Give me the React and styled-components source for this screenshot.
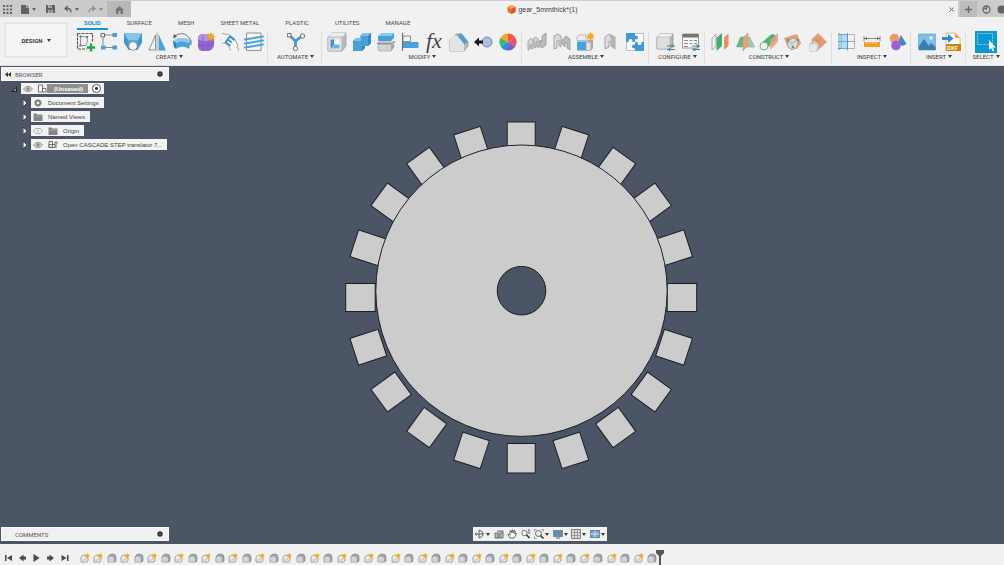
import React, { useState } from "react";
import styled, { createGlobalStyle } from "styled-components";

const GlobalStyle = createGlobalStyle`
  * {
    box-sizing: border-box;
  }
  body {
    margin: 0;
    overflow: hidden;
    font-family: Roboto, "Liberation Sans", sans-serif;
    font-size: 6px;
    color: #3c3c3c;
  }
  button {
    font: inherit;
    color: inherit;
    margin: 0;
    padding: 0;
    border: 0;
    background: none;
  }
  svg {
    display: block;
    flex: none;
    overflow: visible;
  }
`;

const Page = styled.div`
  display: flex;
  flex-direction: column;
  min-height: 100vh;
  background: #f1f1f1;
`;

/* ---------- title bar ---------- */

const TitleBar = styled.header`
  display: flex;
  height: 17px;
  padding-top: 1px;
  background: #cbcbcb;
`;

const QuickAccess = styled.div`
  display: flex;
  align-items: center;
  justify-content: space-between;
  width: 107px;
  padding: 0 4px 0 3px;
`;

const QuickButton = styled.button`
  display: flex;
  align-items: center;
  gap: 3px;
  color: ${(p) => (p.$faded ? "#8b8b8b" : "#636363")};
`;

const HomeTab = styled.button`
  && {
    display: flex;
    align-items: center;
    justify-content: center;
    width: 24px;
    padding-top: 2px;
    background: #b9b9b9;
    color: #777;
  }
`;

const DocumentTab = styled.div`
  position: relative;
  display: flex;
  flex: 1;
  align-items: center;
  justify-content: center;
  gap: 2px;
  padding-right: 4px;
  background: #f1f1f1;
  font-family: "Liberation Sans", Arial, sans-serif;
  font-size: 7px;
`;

const CloseButton = styled.button`
  position: absolute;
  right: 4px;
  top: 6px;
`;

const WindowActions = styled.div`
  display: flex;
  align-items: center;
  gap: 5px;
  width: 46px;
  padding-left: 2px;
  overflow: hidden;
  color: #666;
`;

const NewTabButton = styled.button`
  && {
    display: flex;
    align-items: center;
    justify-content: center;
    width: 17px;
    height: 16px;
    flex: none;
    background: #bdbdbd;
  }
`;

/* ---------- toolbar ---------- */

const Toolbar = styled.div`
  display: flex;
  height: 49px;
  border-bottom: 1px solid #dde4ea;
`;

const WorkspaceButton = styled.button`
  && {
    width: 62px;
    height: 34px;
    margin: 6px 3px 0 5px;
    border: 1px solid #e2e2e2;
    border-radius: 1px;
    background: #f5f5f5;
    box-shadow: 0 0 1px #bbb;
    font-weight: 700;
  }
`;

const Caret = styled.span`
  display: inline-block;
  margin-left: ${(p) => p.$gap ?? 2}px;
  border: 2px solid transparent;
  border-top: 3px solid currentColor;
  border-bottom: 0;
  vertical-align: 1px;
`;

const ToolbarMain = styled.div`
  flex: 1;
  min-width: 0;
`;

const TabList = styled.nav`
  display: flex;
  gap: 12px;
  height: 13px;
  padding-left: 7px;
`;

const TabButton = styled.button`
  && {
    padding: 0 7px;
    border-bottom: 2px solid ${(p) => (p.$active ? "#1493d1" : "transparent")};
    color: ${(p) => (p.$active ? "#1493d1" : "#4a4a4a")};
    font-weight: ${(p) => (p.$active ? 700 : 400)};
    line-height: 11px;
  }
`;

const Groups = styled.div`
  display: grid;
  grid-template-columns: 198fr 54fr 200fr 127fr 56fr 127fr 79fr 55fr 38fr;
`;

const Group = styled.section`
  display: flex;
  flex-direction: column;
  min-width: 0;
  height: 32px;
  margin-top: 1px;
  padding: 0 1px 0 3px;
  border-right: 1px solid #dedede;
  &:last-child {
    border-right: 0;
  }
`;

const IconRow = styled.div`
  display: flex;
  align-items: center;
  justify-content: space-around;
  height: 21px;
`;

const MenuButton = styled.button`
  && {
    height: 10px;
    line-height: 10px;
    white-space: nowrap;
  }
`;

/* ---------- viewport ---------- */

const Viewport = styled.main`
  position: relative;
  display: flex;
  flex: 1;
  flex-direction: column;
  justify-content: space-between;
  padding: 1px 0 3px 1px;
  background: #4b5566;
`;

const Drawing = styled.svg`
  position: absolute;
  inset: 0;
  width: 100%;
  height: 100%;
`;

const BrowserPanel = styled.aside`
  position: relative;
  width: 168px;
`;

const PanelHeader = styled.div`
  display: flex;
  align-items: center;
  width: 168px;
  height: 14px;
  padding: 0 5px 0 3px;
  border: 1px solid #fafafa;
  background: #f0f0f0;
  color: #555;
`;

const PanelTitle = styled.span`
  flex: 1;
  padding-left: ${(p) => (p.$indent ? 10 : 4)}px;
`;

const Tree = styled.ul`
  display: flex;
  flex-direction: column;
  gap: 3px;
  margin: 2px 0 0;
  padding: 0;
  list-style: none;
  font-family: "Liberation Sans", Arial, sans-serif;
`;

const TreeRow = styled.li`
  display: flex;
  align-items: center;
  gap: 4px;
  height: 11px;
  padding-left: ${(p) => (p.$root ? 10 : 21)}px;
`;

const TreeItem = styled.div`
  display: flex;
  align-items: center;
  gap: ${(p) => (p.$root ? 4 : 5)}px;
  height: 11px;
  padding: 0 ${(p) => (p.$root ? 3 : 5)}px 0 2px;
  background: #f3f3f3;
  white-space: nowrap;
`;

const RootName = styled.span`
  display: flex;
  align-items: center;
  gap: 7px;
  height: 9px;
  padding-right: 5px;
  background: #8f8f8f;
  color: #fff;
  font-weight: 700;
`;

const ActiveRadio = styled.input`
  appearance: none;
  width: 9px;
  height: 9px;
  margin: 0;
  border: 1px solid #555;
  border-radius: 50%;
  background: radial-gradient(circle, #333 0 1px, #fff 2px);
`;

const BottomBar = styled.div`
  position: relative;
  display: grid;
  grid-template-columns: minmax(0, 472fr) minmax(0, 531fr);
`;

const ViewTools = styled.div`
  display: flex;
  align-items: center;
  justify-content: space-between;
  width: 134px;
  height: 14px;
  padding: 0 2px;
  background: #f1f1f1;
`;

const ViewButton = styled.button`
  display: flex;
  align-items: center;
`;

/* ---------- timeline ---------- */

const Timeline = styled.footer`
  display: flex;
  height: 21px;
  padding: 6px 0 0 1px;
  background: #f1f1f1;
`;

const Transport = styled.div`
  display: flex;
  width: 77px;
`;

const TransportButton = styled.button`
  display: flex;
  align-items: center;
  justify-content: center;
  width: 14px;
  height: 16px;
`;

const Features = styled.div`
  display: flex;
  align-items: center;
  justify-content: space-around;
  width: 58%;
  height: 16px;
`;

const Playhead = styled.svg`
  margin-left: -4px;
`;

/* ---------- icons ---------- */

const Icon = ({ children, size = 20, width, box = 20, boxWidth }) => (
  <svg
    width={width || size}
    height={size}
    viewBox={`0 0 ${boxWidth || box} ${box}`}
    fill="none"
    aria-hidden="true"
  >
    {children}
  </svg>
);

const Spark = ({ x, y, r = 4 }) => (
  <path
    transform={`translate(${x} ${y}) scale(${r / 4})`}
    fill="#f6a81c"
    d="M0-4 1-2 3-3 2-1 4 0 2 1 3 3 1 2 0 4-1 2-3 3-2 1-4 0-2-1-3-3-1-2Z"
  />
);

const createIcons = {
  Sketch: (
    <>
      <path d="M2.500 1.500h15v9M2.500 1.500v15.500h9" stroke="#555" strokeWidth="1.200" strokeDasharray="3 1" />
      <path d="M5.500 14V4.500M4 13.500h7M5.500 4.500c8-1 8 3 5.500 9" stroke="#888" strokeWidth=".9" />
      <path d="M4.500 3.500h2v2h-2zM4.500 12.500h2v2h-2zM11 4h2v2h-2z" fill="#777" />
      <path d="M16 11.500v8M12 15.500h8" stroke="#1fa64a" strokeWidth="2.400" />
    </>
  ),
  "Rectangular pattern": (
    <>
      <path d="M6 3h8M4 6v7M6 15.500h8" stroke="#8a8a8a" />
      <path d="M2 1.500h3.500V5H2z" fill="#fff" stroke="#666" />
      <path d="M13.500 1h4.500v4h-4.500zM2 13.500h4.500v4H2zM13.500 13.500h4.500v4h-4.500z" fill="#4c9fd6" />
    </>
  ),
  Extrude: (
    <>
      <path d="M1 1h18v9l-5 8H6l-5-8z" fill="#3f98d4" />
      <path d="M1 1h18l-4 7H5z" fill="#85c5ec" />
      <path d="M5 8h10l-1 6H6z" fill="#5badde" />
      <path d="m1 10 5 8M19 10l-5 8" stroke="#2b7db3" strokeWidth=".6" />
      <circle cx="10" cy="14" r="4.300" fill="#f5f5f5" stroke="#8a8a8a" strokeWidth=".9" />
    </>
  ),
  Mirror: (
    <>
      <path d="M8.500 3v15H2z" fill="#f2f2f2" stroke="#777" strokeWidth=".8" />
      <path d="M11.500 2v16.500H19z" fill="#4ba5dd" />
      <path d="M10 .5v19" stroke="#8a8a8a" strokeWidth=".7" />
    </>
  ),
  Revolve: (
    <>
      <path d="M1 9c5-4 13-4 18 0l-2 8c-4-3-9-3-13 0z" fill="#4ba3dc" />
      <path d="M1 9c5-4 13-4 18 0l-3 2c-4-2-8-2-12 0z" fill="#8ccbf0" />
      <path d="m1 9 3 2v6l-2-2z" fill="#2a7db7" />
      <path d="M2 5c5-5 13-5 17 4v4" stroke="#666" strokeWidth=".9" />
      <path d="M1 6.500 2 2l3 2.500z" fill="#555" />
    </>
  ),
  Form: (
    <>
      <path d="M2 7q0-5 5-5h7q4 1 4 6v5q-1 6-7 6H7q-5 0-5-5z" fill="#9467cf" />
      <path d="M2 7q1-5 5-5h7q4 1 4 4l-6 3q-6 1-10-2z" fill="#b891e6" />
      <path d="M12 9v9M2 13.500h10q4 0 6-3M7 3v15" stroke="#7c50b8" strokeWidth=".6" />
      <Spark x="15" y="4.500" r="4.500" />
    </>
  ),
  Emboss: (
    <>
      <path d="M2 1.500q15 0 16.500 17H11q-1-8-9-8z" fill="#f5f5f5" />
      <path d="M2 1.500q15 0 16.500 17M2 11q7 0 8.500 8" stroke="#999" strokeWidth=".9" />
      <path transform="translate(9 9) rotate(38)" d="M4-4h-6v7h6M-2-.500h5" stroke="#3591cf" strokeWidth="1.800" />
    </>
  ),
  Thread: (
    <>
      <path d="M2.500 1h14.500v17.500H2.500z" fill="#f6f6f6" stroke="#777" strokeWidth=".8" />
      <path d="m1 7.500 18-3M1 11.500l18-3M1 15.500l18-3" stroke="#4aa3dc" strokeWidth="2" strokeLinecap="round" />
    </>
  ),
};

const automateIcons = {
  Automate: (
    <>
      <path d="m3.500 3.500 6 5.500 6-4.500M9.500 9v7" stroke="#4a96c6" strokeWidth="2.800" />
      <circle cx="16.500" cy="4" r="2.200" fill="#f3f3f3" stroke="#666" strokeWidth=".9" />
      <circle cx="9.500" cy="16.500" r="2.200" fill="#f3f3f3" stroke="#666" strokeWidth=".9" />
      <path d="M1.500 1.500h3.500V5H1.500z" fill="#f3f3f3" stroke="#666" strokeWidth=".9" />
    </>
  ),
};

const modifyIcons = {
  Shell: (
    <>
      <path d="m1 5 4-4h14v13l-4 5H1z" fill="#b9bcbf" stroke="#888" strokeWidth=".6" />
      <path d="m1 5 4-4h14l-4 4z" fill="#ececec" />
      <path d="M1 5h14v14H1z" fill="#dedede" stroke="#999" strokeWidth=".5" />
      <path d="M3.500 7.500h9v9h-9z" fill="#f8f8f8" />
      <path d="M3.500 7.500h3.500v5l-3.500 4z" fill="#3e94cf" />
      <path d="M3.500 16.500 7 12.500h5.500v4z" fill="#6db6e4" />
    </>
  ),
  Combine: (
    <>
      <path d="m1 9 3-3h4V4l3-3h8v10l-3 3h-3v2l-3 3H1z" fill="#4a9fd9" />
      <path d="m1 9 3-3h4V4l3-3h8l-3 3H9v5z" fill="#7bc0ea" />
      <path d="m16 4 3-3v10l-3 3zM10 14h3v2l-3 3z" fill="#2f87c3" />
    </>
  ),
  Split: (
    <>
      <path d="m2 4 4-3h12v5l-3 3H2z" fill="#4a9fd9" />
      <path d="m2 4 4-3h12l-3 3z" fill="#8dcaf0" />
      <path d="M2 12.500h16V15l-3 4H4q-2 0-2-2z" fill="#d3d3d3" stroke="#999" strokeWidth=".6" />
      <path d="M15 12.500h3V15l-3 4z" fill="#a5a5a5" />
      <path d="m1 11.500 3-1.500h15l-3 1.500z" fill="#fff" stroke="#666" strokeWidth=".7" />
    </>
  ),
  Align: (
    <>
      <path d="M2.500 1v18" stroke="#666" />
      <path d="M3 4h7.500v5.500H3z" fill="#f5f5f5" stroke="#777" strokeWidth=".8" />
      <path d="M3 10h15.500v6H3z" fill="#46a2dc" />
    </>
  ),
  "Change parameters": (
    <text x="1" y="16" fill="#444" fontFamily="Liberation Serif, serif" fontStyle="italic" fontSize="22">
      fx
    </text>
  ),
  Chamfer: (
    <>
      <path d="m1 8 6-6h6l6 8v4l-4 5H1z" fill="#bcbcbc" stroke="#8a8a8a" strokeWidth=".7" />
      <path d="M1 9q1-6 6-6l8 9v7H1z" fill="#e4e4e4" />
      <path d="m8 2.500 4-1 7 8.500-3.500 2.500z" fill="#4c9fd8" />
    </>
  ),
  Move: (
    <>
      <circle cx="14" cy="10" r="5" fill="#a9c0e6" stroke="#6d7a94" strokeWidth=".9" />
      <path d="m1 10 5-4.500V8.500h4v3H6v3z" fill="#1b1b1b" />
    </>
  ),
  Appearance: (
    <>
      <path d="M10 10V1.500a8.500 8.500 0 0 1 7.400 4.250z" fill="#ef5b40" />
      <path d="m10 10 7.400-4.250a8.500 8.500 0 0 1 0 8.500z" fill="#ee4f6c" />
      <path d="m10 10 7.400 4.250A8.500 8.500 0 0 1 10 18.500z" fill="#8458cc" />
      <path d="M10 10v8.500a8.500 8.500 0 0 1-7.400-4.250z" fill="#2c8fe0" />
      <path d="m10 10-7.400 4.250a8.500 8.500 0 0 1 0-8.500z" fill="#40b967" />
      <path d="M10 10 2.600 5.750A8.500 8.500 0 0 1 10 1.500z" fill="#f3a52c" />
    </>
  ),
};

const assembleIcons = {
  Joint: (
    <>
      <path d="M1 18V9l3-3 2 2v9l-2-1v-4l-1 1v4zM7 15V6l2-1 3 3v8l-2-2V9l-1 1v6z" fill="#d4d6d8" stroke="#8a8a8a" strokeWidth=".7" />
      <path d="m15 4 4-3v12l-4 3-2-2V8l2 2z" fill="#babec1" stroke="#8a8a8a" strokeWidth=".7" />
    </>
  ),
  "As-built joint": (
    <>
      <path d="M2 17V4l4-2 3 2v11l-2-1V8L5 9v7z" fill="#d9dbdc" stroke="#8a8a8a" strokeWidth=".7" />
      <path d="m11 7 3-3 4 3v11l-3-2v-5l-2-1v5l-3-3V8z" fill="#b9bdc0" stroke="#8a8a8a" strokeWidth=".7" />
    </>
  ),
  "New component": (
    <>
      <path d="m1 5 2-2h7v6H1z" fill="#ededed" stroke="#999" strokeWidth=".6" />
      <path d="M1 10h9v8.500H1z" fill="#4a9fd9" />
      <path d="m1 10 2-2h8l-1 2z" fill="#8ccaf0" />
      <path d="M10 10h5v8.500h-5z" fill="#e0e0e0" stroke="#999" strokeWidth=".6" />
      <path d="m10 10 2-2h5l-2 2zM15 10l2-2v8l-2 2.500z" fill="#a9a9a9" />
      <Spark x="14.500" y="4.500" r="4.500" />
    </>
  ),
  "Rigid group": (
    <>
      <path d="m5 5 4-3 6 3v12l-4-3v-4l-2-1v6l-4 2z" fill="#dcdcdc" stroke="#8a8a8a" strokeWidth=".7" />
      <path d="m9 2 6 3v12l-4-3V7z" fill="#b3b3b3" />
    </>
  ),
  "Drive joints": (
    <>
      <path d="M1.500 1.500h17v17h-17z" fill="#fbfbfb" stroke="#999" strokeWidth=".6" />
      <path d="M1 1h9v9H1zM10 10h9v9h-9z" fill="#3f9ad6" />
      <circle cx="11" cy="5.500" r="2" fill="#3f9ad6" />
      <circle cx="9" cy="14.500" r="2" fill="#3f9ad6" />
      <circle cx="5.500" cy="9" r="2" fill="#fbfbfb" />
      <circle cx="14.500" cy="11" r="2" fill="#fbfbfb" />
    </>
  ),
};

const configureIcons = {
  Configure: (
    <>
      <path d="m2 5 3-3.500h13V13l-3 4H2z" fill="#b7b7b7" stroke="#8a8a8a" strokeWidth=".7" />
      <path d="m2 5 3-3.500h13L15 5z" fill="#efefef" />
      <path d="M2 5h13v12H2z" fill="#dedede" stroke="#999" strokeWidth=".4" />
      <path d="M12 14h8M12 17.500h8" stroke="#666" strokeWidth=".9" />
      <path d="M17.500 12.500v3M14.500 16v3" stroke="#3298d5" strokeWidth="1.800" />
    </>
  ),
  "Configuration table": (
    <>
      <path d="M2.500 2h16v14h-16z" fill="#f7f7f7" stroke="#888" strokeWidth=".8" />
      <path d="M2.500 2h16v3.500h-16z" fill="#777" />
      <path d="M4 8.500h4M9.500 8.500h3M14 8.500h3M4 11.500h4M9.500 11.500h3M14 11.500h3M4 14.500h4" stroke="#8a8a8a" strokeWidth="1.200" />
      <path d="M12 14h8M12 17.500h8" stroke="#666" strokeWidth=".9" />
      <path d="M17.500 12.500v3M14.500 16v3" stroke="#3298d5" strokeWidth="1.800" />
    </>
  ),
};

const constructIcons = {
  "Offset plane": (
    <>
      <path d="m2 6 4-4v12l-4 4z" fill="#f3f3f3" stroke="#999" strokeWidth=".8" />
      <path d="m6.500 6 5.500-5v13l-5.500 5z" fill="#42b06c" />
      <path d="m14 5.500 4.500-4v12.500L14 18z" fill="#e8915f" />
    </>
  ),
  Midplane: (
    <>
      <path d="M5.500 5h9l5 10h-18z" fill="#9ccfb1" stroke="#7aa890" strokeWidth=".6" />
      <path d="M5.500 5h4l-2 10h-6z" fill="#62b785" />
      <path d="m8 6 5-5v12l-5 6z" fill="#eba27b" stroke="#d48a62" strokeWidth=".5" />
    </>
  ),
  "Axis through cylinder": (
    <>
      <path d="M2 11.500 12 2.500q5-1 5.500 4.500L7.500 17z" fill="#4bb274" />
      <path d="m11 8 8-7v9l-8 8z" fill="#e2a17b" opacity=".85" />
      <circle cx="5" cy="14" r="4" fill="#f2f6f3" stroke="#5fae80" strokeWidth=".9" />
    </>
  ),
  "Plane through points": (
    <>
      <path d="m1 6 13-4 4 9-4 6-9-1z" fill="#ea9a70" />
      <path d="m5 9 5-3 5 2-1 7-5 3-4-3z" fill="#ddd" stroke="#999" strokeWidth=".7" />
      <path d="m5 9 4 2 6-3M9 11v7" stroke="#999" strokeWidth=".7" />
      <path d="M4 7h2v2H4zM14 7h2v2h-2zM9 14h2v2H9z" fill="#44a868" />
    </>
  ),
  "Tangent plane": (
    <>
      <path d="m3 8 7-7 9 9-8 7z" fill="#ea9a70" />
      <path d="m6 5 9 9M14 5 7 11" stroke="#c97f57" strokeWidth=".7" />
      <path d="M2 12.500 6 8l5 4v5l-2 2H2z" fill="#cfcfcf" stroke="#999" strokeWidth=".7" />
      <path d="M2 12.500h6.500V19H2z" fill="#e8e8e8" />
    </>
  ),
};

const inspectIcons = {
  Section: (
    <>
      <path d="M4 2.500h6v14H4z" fill="#b5dbf3" />
      <path d="M10.500 2.500h7v14h-7z" fill="#f2f2f2" stroke="#a3a3a3" strokeWidth=".8" />
      <path d="M4 2.500h6.500v14H4zM4 9.500h13.500" stroke="#6fa3c4" strokeWidth=".9" />
      <path d="M2 1v17M1 2.500h4M1 9.500h3M1 16.500h4M10.500 1v17.500" stroke="#4b9ed3" strokeWidth=".9" />
    </>
  ),
  Measure: (
    <>
      <path d="M2 6.500h16M2 4v5M18 4v5" stroke="#777" strokeWidth=".9" />
      <path d="m3 6.500 2-1.500v3zM17 6.500 15 5v3z" fill="#555" />
      <path d="M2 10h16v5H2z" fill="#f0a01f" />
      <path d="M5 10v2M8 10v2M11 10v2M14 10v2" stroke="#fff1cb" strokeWidth=".8" />
    </>
  ),
  Interference: (
    <>
      <path d="m14 3 5.500 9-4 2-5-3z" fill="#4386bd" />
      <circle cx="7.500" cy="6.500" r="4.800" fill="#ec9a6c" />
      <circle cx="9" cy="13.500" r="4.800" fill="#9c5fd6" />
    </>
  ),
};

const insertIcons = {
  Canvas: (
    <>
      <path d="M1.500 2h17v16h-17z" fill="#7fbfe8" stroke="#62a5d2" strokeWidth=".7" />
      <path d="m2 14 5-7 5 7 2-3 4.500 4v3H2z" fill="#357faf" />
      <circle cx="14" cy="6" r="1.700" fill="#e3f1fa" />
    </>
  ),
  DXF: (
    <>
      <path d="M4 1h9l5 5v12H4z" fill="#fbfbfb" stroke="#c2a26a" strokeWidth=".7" />
      <path d="m13 1 5 5h-5z" fill="#efa72d" />
      <path d="M0 5h6V2l5.500 4.500L6 11V8H0z" fill="#2a8cca" />
      <path d="M4 12h15v7H4z" fill="#c98413" />
      <text x="5" y="18" fill="#fff6df" fontSize="6" fontWeight="700">
        DXF
      </text>
    </>
  ),
};

const selectIcons = {
  Select: (
    <>
      <path d="M-1-1h22v22H-1z" fill="#0b97d6" />
      <path d="M1.500 1.500h15v11h-15z" stroke="#9fd8a0" strokeWidth=".9" strokeDasharray="2 1" />
      <path d="M13 8v10l2.200-2 1.500 3.500 1.600-.7-1.500-3.300h3z" fill="#fff" />
    </>
  ),
};

const groups = [
  { label: "CREATE", icons: createIcons },
  { label: "AUTOMATE", icons: automateIcons },
  { label: "MODIFY", icons: modifyIcons },
  { label: "ASSEMBLE", icons: assembleIcons },
  { label: "CONFIGURE", icons: configureIcons },
  { label: "CONSTRUCT", icons: constructIcons },
  { label: "INSPECT", icons: inspectIcons },
  { label: "INSERT", icons: insertIcons },
  { label: "SELECT", icons: selectIcons },
];

const tabs = ["SOLID", "SURFACE", "MESH", "SHEET METAL", "PLASTIC", "UTILITES", "MANAGE"];

const Eye = ({ open = true }) => (
  <Icon size={8} width={10} box={8} boxWidth={10}>
    <path d="M.500 4q4.500-5.500 9 0-4.500 5.500-9 0z" fill={open ? "#c4c4c4" : "#fff"} stroke="#909090" strokeWidth=".8" />
    <circle cx="5" cy="4" r="1.400" fill={open ? "#888" : "#ccc"} />
  </Icon>
);

const Folder = () => (
  <Icon size={8} width={10} box={8} boxWidth={10}>
    <path d="M.500.500h3l1 1h5V8h-9z" fill="#858585" />
    <path d="M.500 3h9" stroke="#bbb" strokeWidth=".6" />
  </Icon>
);

const Gear = () => (
  <Icon size={8} width={10} box={8} boxWidth={10}>
    <circle cx="5" cy="4" r="2.300" stroke="#777" strokeWidth="1.700" />
    <circle cx="5" cy="4" r="3.400" stroke="#777" strokeWidth=".8" strokeDasharray="1.300 1.300" />
  </Icon>
);

const Translator = () => (
  <Icon size={9} width={10} box={9} boxWidth={10}>
    <path d="M1 1.500h3.500v6H1zM1 4.500h6v3H1zM8 8V2M6.500 3.500 8 1.500l1.500 2" stroke="#555" strokeWidth=".8" />
  </Icon>
);

const Expander = () => (
  <Icon size={8} width={5} box={8} boxWidth={5}>
    <path d="M1 1 4 4 1 7z" fill="#fff" stroke="#fff" strokeWidth=".8" />
    <path d="M1 0v8" stroke="#20252e" />
  </Icon>
);

const Dot = () => (
  <Icon size={6} box={6}>
    <circle cx="3" cy="3" r="2.700" fill="#333" />
    <path d="M1.800 3h2.400" stroke="#999" strokeWidth=".7" />
  </Icon>
);

const viewIcons = [
  {
    name: "Orbit",
    menu: true,
    art: <path d="M0 5h9M4 1v8M4 1q4 1 4 4T4 9M1.500 3.500 0 5l1.500 1.500" stroke="#555" strokeWidth=".9" />,
  },
  {
    name: "Look at",
    art: (
      <>
        <path d="M1 4h8v5H1zM3 2h6v2" fill="#bbb" stroke="#666" strokeWidth=".9" />
        <path d="M3 6h4M3 8h4" stroke="#555" strokeWidth=".7" />
      </>
    ),
  },
  {
    name: "Pan",
    art: (
      <path
        d="M3 9 1 5.500l1-.3 1 1V2l1-.3L5 4V1h1l.5 3 .8-2.500.9.500-.4 3L9 4l.5.500L8 7.500 7 9z"
        fill="#fafafa"
        stroke="#444"
        strokeWidth=".8"
      />
    ),
  },
  {
    name: "Zoom",
    art: (
      <>
        <circle cx="3.500" cy="4" r="2.700" stroke="#666" strokeWidth=".9" />
        <path d="m5.500 6 3 3" stroke="#333" strokeWidth="1.600" />
        <path d="M8 .500v4M6.800 1.700 8 .500l1.200 1.200M6.800 3.300 8 4.500l1.200-1.200" stroke="#555" strokeWidth=".7" />
      </>
    ),
  },
  {
    name: "Fit",
    menu: true,
    art: (
      <>
        <path d="M.500 2.500v-2h2M7.500.500h2v2M.500 7.500v2h2" stroke="#888" strokeWidth=".8" />
        <circle cx="4.500" cy="4.500" r="3" stroke="#555" strokeWidth=".9" />
        <path d="m6.500 6.500 3 3" stroke="#333" strokeWidth="1.600" />
      </>
    ),
  },
  {
    name: "Display settings",
    menu: true,
    art: (
      <>
        <path d="M.5 1.500h9v6h-9z" fill="#5d8db7" stroke="#777" strokeWidth=".8" />
        <path d="M3 9h4" stroke="#666" />
      </>
    ),
  },
  {
    name: "Grid and snaps",
    menu: true,
    art: (
      <>
        <path d="M.5.500h9v9h-9z" fill="#ddd" stroke="#777" strokeWidth=".9" />
        <path d="M3.500.500v9M6.500.500v9M.5 3.500h9M.5 6.500h9" stroke="#888" strokeWidth=".7" />
      </>
    ),
  },
  {
    name: "Viewports",
    menu: true,
    art: (
      <>
        <path d="M.5 1.500h9v7h-9z" fill="#76a5ca" stroke="#476b8b" strokeWidth=".8" />
        <path d="M5 1.500v7M.5 5h9" stroke="#eef" strokeWidth=".8" />
      </>
    ),
  },
];

const transportIcons = [
  { name: "Start", d: "M1 1h1.500v6H1zM8 1v6L3 4z" },
  { name: "Back", d: "M5.500.500v2h2.500v3H5.500v2L1 4z" },
  { name: "Play", d: "M1.500 0 7.500 4l-6 4z" },
  { name: "Forward", d: "M3.500.500v2H1v3h2.500v2L8 4z" },
  { name: "End", d: "M7 1h1.500v6H7zM1.500 1v6l5-3z" },
];

const SketchFeature = () => (
  <Icon size={10} box={10}>
    <path d="M1 4q1-2 4-2l3 3v2L7 9H1z" fill="#ececec" stroke="#999" strokeWidth=".9" />
    <path d="M2.500 7q3 1 4-2" stroke="#aaa" strokeWidth=".7" />
    <Spark x="7.200" y="2.800" r={2.800} />
  </Icon>
);

const ExtrudeFeature = () => (
  <Icon size={10} box={10}>
    <path d="M1 4q1-3 4.500-3Q9 1 9 4.500V8L7.500 9H1z" fill="#9fa6ae" stroke="#808080" strokeWidth=".7" />
    <path d="M1.300 4.500q3-2 5.500.500v3.700H1.300z" fill="#d3d7dc" />
  </Icon>
);

const features = Array.from({ length: 43 }, (_, i) => (i > 0 && i % 2 === 0 ? "extrude" : "sketch"));

const teeth = Array.from({ length: 20 }, (_, i) => i * 18);

function TopBar() {
  return (
    <TitleBar>
      <QuickAccess>
        <QuickButton aria-label="Data panel">
          <Icon size={9} box={9}>
            <path d="M0 0h2v2H0zM3.500 0h2v2h-2zM7 0h2v2H7zM0 3.500h2v2H0zM3.500 3.500h2v2h-2zM7 3.500h2v2H7zM0 7h2v2H0zM3.500 7h2v2h-2zM7 7h2v2H7z" fill="currentColor" />
          </Icon>
        </QuickButton>
        <QuickButton aria-label="File">
          <Icon size={9} width={8} box={9} boxWidth={8}>
            <path d="M0 0h5v3h3v6H0zM5.600 0 8 2.400H5.600z" fill="currentColor" />
          </Icon>
          <Caret $gap={0} />
        </QuickButton>
        <QuickButton aria-label="Save">
          <Icon size={8} width={9} box={8} boxWidth={9}>
            <path d="M0 0h9v8H0z" fill="currentColor" />
            <path d="M2 0h4v3H2zM2 5h5v3H2z" fill="#aaa" />
            <path d="M5 0v2M3 6.500h3" stroke="#666" strokeWidth=".8" />
          </Icon>
        </QuickButton>
        <QuickButton aria-label="Undo">
          <Icon size={8} box={8}>
            <path d="M4 1 1 3.500 4 6M1 3.500h3q3 0 3 4" stroke="currentColor" strokeWidth="1.300" />
          </Icon>
          <Caret $gap={0} />
        </QuickButton>
        <QuickButton $faded aria-label="Redo">
          <Icon size={8} box={8}>
            <path d="m4 1 3 2.500L4 6M7 3.500H4q-3 0-3 4" stroke="currentColor" strokeWidth="1.200" />
          </Icon>
          <Caret $gap={0} />
        </QuickButton>
      </QuickAccess>
      <HomeTab aria-label="Home">
        <Icon size={8} width={9} box={8} boxWidth={9}>
          <path d="M4.500 0 9 4H8v4H5.500V5h-2v3H1V4H0z" fill="currentColor" />
        </Icon>
      </HomeTab>
      <DocumentTab>
        <Icon size={9} box={9}>
          <path d="m.5 2 4-2 4 2v5l-4 2-4-2z" fill="#e8702a" />
          <path d="m.5 2 4-2 4 2-4 2z" fill="#f6a36c" />
          <path d="m4.500 4 4-2v5l-4 2z" fill="#d25a1b" />
        </Icon>
        <span>gear_5mmthick*(1)</span>
        <CloseButton aria-label="Close">
          <Icon size={5} box={5}>
            <path d="m.5.500 4 4M4.500.500l-4 4" stroke="#666" />
          </Icon>
        </CloseButton>
      </DocumentTab>
      <WindowActions>
        <NewTabButton aria-label="New tab">
          <Icon size={9} box={9}>
            <path d="M4.500 1v7M1 4.500h7" stroke="#666" strokeWidth="1.300" />
          </Icon>
        </NewTabButton>
        <QuickButton aria-label="Extensions">
          <Icon size={9} box={9}>
            <circle cx="4.500" cy="4.500" r="3.500" stroke="currentColor" strokeWidth="1.300" />
            <path d="M4.500 4.500V2M4.500 4.500 2 3" stroke="currentColor" strokeWidth="1.300" />
          </Icon>
        </QuickButton>
        <QuickButton aria-label="Job status">
          <Icon size={9} box={9}>
            <circle cx="5.500" cy="4.500" r="4" fill="currentColor" />
          </Icon>
        </QuickButton>
      </WindowActions>
    </TitleBar>
  );
}

function Browser() {
  return (
    <BrowserPanel>
      <PanelHeader>
        <Icon size={5} width={6} box={5} boxWidth={6}>
          <path d="M3 0v5L0 2.500zM6 0v5L3 2.500z" fill="#333" />
        </Icon>
        <PanelTitle>BROWSER</PanelTitle>
        <Dot />
      </PanelHeader>
      <Tree>
        <TreeRow $root>
          <Icon size={6} box={6}>
            <path d="M6 0v6H0z" fill="#222831" />
            <path d="M4.800 2.600v2.200H2.600z" fill="#cbd0d8" />
          </Icon>
          <TreeItem $root>
            <Eye />
            <RootName>
              <Icon size={9} width={10} box={9} boxWidth={10}>
                <path d="M0 0h10v9H0z" fill="#ececec" />
                <path d="M1.500 1h4v7h-4z" fill="#fff" stroke="#555" strokeWidth=".8" />
                <path d="M5.500 4.500h3.500V8H5.500z" fill="#fff" stroke="#555" strokeWidth=".8" />
              </Icon>
              <label htmlFor="active-component">(Unsaved)</label>
            </RootName>
            <ActiveRadio type="radio" id="active-component" defaultChecked />
          </TreeItem>
        </TreeRow>
        <TreeRow>
          <Expander />
          <TreeItem>
            <Gear />
            <span>Document Settings</span>
          </TreeItem>
        </TreeRow>
        <TreeRow>
          <Expander />
          <TreeItem>
            <Folder />
            <span>Named Views</span>
          </TreeItem>
        </TreeRow>
        <TreeRow>
          <Expander />
          <TreeItem>
            <Eye open={false} />
            <Folder />
            <span>Origin</span>
          </TreeItem>
        </TreeRow>
        <TreeRow>
          <Expander />
          <TreeItem>
            <Eye />
            <Translator />
            <span>Open CASCADE STEP translator 7...</span>
          </TreeItem>
        </TreeRow>
      </Tree>
    </BrowserPanel>
  );
}

function GearModel() {
  return (
    <Drawing viewBox="0 0 1004 478" fill="#cccccc" stroke="#1c1f26" strokeWidth="1">
      {teeth.map((angle) => (
        <rect
          key={angle}
          x="-14"
          y="-175.500"
          width="28"
          height="29.500"
          transform={`translate(521.200 231.500) rotate(${angle})`}
        />
      ))}
      <circle cx="521.500" cy="224.700" r="145.700" />
      <circle cx="521.500" cy="224.700" r="24.300" fill="#4b5566" />
    </Drawing>
  );
}

function App() {
  const [activeTab, setActiveTab] = useState("SOLID");

  return (
    <Page>
      <GlobalStyle />
      <TopBar />
      <Toolbar>
        <WorkspaceButton>
          DESIGN
          <Caret $gap={4} />
        </WorkspaceButton>
        <ToolbarMain>
          <TabList>
            {tabs.map((tab) => (
              <TabButton key={tab} $active={tab === activeTab} onClick={() => setActiveTab(tab)}>
                {tab}
              </TabButton>
            ))}
          </TabList>
          <Groups>
            {groups.map(({ label, icons }) => (
              <Group key={label}>
                <IconRow>
                  {Object.entries(icons).map(([name, art]) => (
                    <button key={name} aria-label={name}>
                      <Icon>{art}</Icon>
                    </button>
                  ))}
                </IconRow>
                <MenuButton>
                  {label}
                  <Caret />
                </MenuButton>
              </Group>
            ))}
          </Groups>
        </ToolbarMain>
      </Toolbar>
      <Viewport>
        <GearModel />
        <Browser />
        <BottomBar>
          <PanelHeader>
            <PanelTitle $indent>COMMENTS</PanelTitle>
            <Dot />
          </PanelHeader>
          <ViewTools>
            {viewIcons.map(({ name, art, menu }) => (
              <ViewButton key={name} aria-label={name}>
                <Icon size={10} box={10}>
                  {art}
                </Icon>
                {menu && <Caret $gap={1} />}
              </ViewButton>
            ))}
          </ViewTools>
        </BottomBar>
      </Viewport>
      <Timeline>
        <Transport>
          {transportIcons.map(({ name, d }) => (
            <TransportButton key={name} aria-label={name}>
              <Icon size={8} width={9} box={8} boxWidth={9}>
                <path d={d} fill="#4a4a4a" />
              </Icon>
            </TransportButton>
          ))}
        </Transport>
        <Features>
          {features.map((kind, i) => (kind === "sketch" ? <SketchFeature key={i} /> : <ExtrudeFeature key={i} />))}
        </Features>
        <Playhead width="8" height="16" viewBox="0 0 8 16" aria-hidden="true">
          <path d="M0 0h8v3L5 6v9H3V6L0 3z" fill="#555" />
        </Playhead>
      </Timeline>
    </Page>
  );
}

export default App;
